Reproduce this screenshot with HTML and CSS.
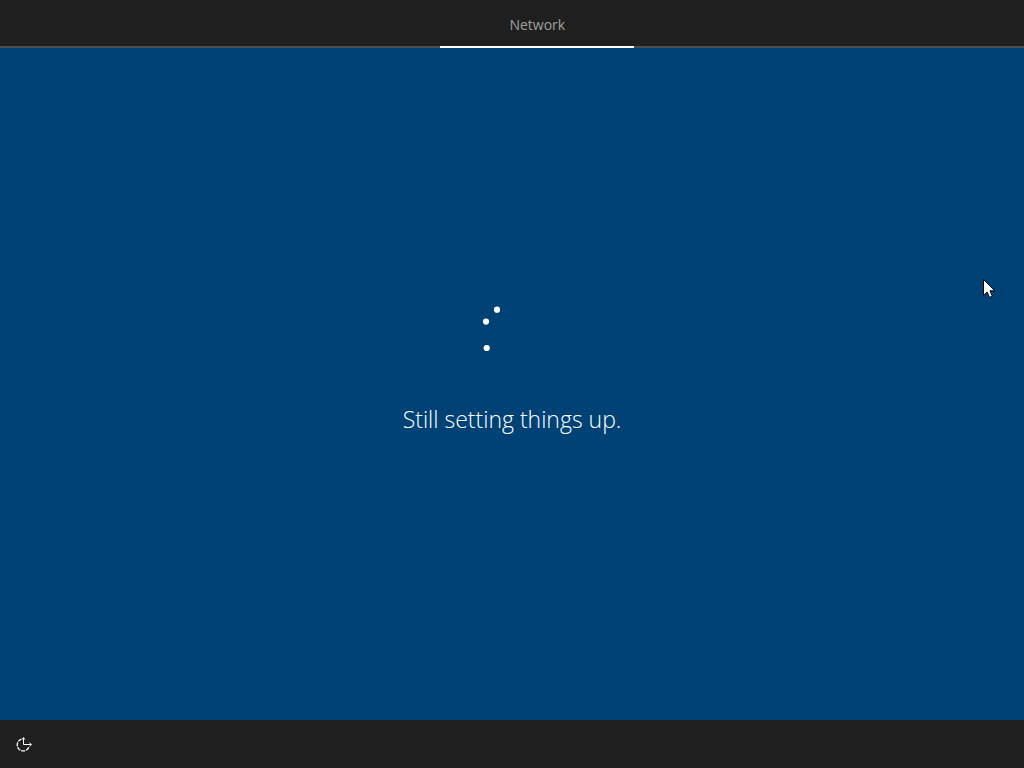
FILE: index.html
```
<!DOCTYPE html>
<html lang="en">
<head>
    <meta charset="UTF-8">
    <title>Network</title>
    <link rel="stylesheet" href="styles.css">
</head>
<body>
<header class="topbar">
    <button type="button" class="tab selected">Network</button>
</header>

<main class="stage">
    <svg class="spinner" viewBox="0 0 64 64" aria-hidden="true">
        <circle cx="17" cy="6.7" r="3.1"/>
        <circle cx="6" cy="18.6" r="3.1"/>
        <circle cx="6.7" cy="45" r="3.1"/>
    </svg>
    <p class="message">Still setting things up.</p>
</main>

<footer class="bottombar">
    <button type="button" class="ease" aria-label="Ease of access">
        <svg viewBox="0 0 18 18" aria-hidden="true">
            <path class="ring" d="M6.5 3.2A6 6 0 1 0 13.9 10.8"/>
            <path d="M8.5 1.5V8.5H16.5M7 3.5L8.5 1.8L10 3.5M14.5 6.8L16.3 8.5L14.5 10.2"/>
        </svg>
    </button>
</footer>

<svg class="cursor" viewBox="0 0 13 20" aria-hidden="true">
    <path d="M0.5 0.5V16.4L4.1 12.9L6.5 18.4L9.3 17.2L7 11.8H11.8Z"/>
</svg>
</body>
</html>
```

FILE: styles.css
```
*{
    margin: 0;
    padding: 0;
    box-sizing: border-box;
}
body{
    min-height: 100vh;
    display: flex;
    flex-direction: column;
    background: #004275;
    color: #ffffff;
    font-family: "Open Sans", "Noto Sans", sans-serif;
}
button{
    border: 0;
    background: none;
    color: inherit;
    font-family: inherit;
}
.topbar{
    height: 48px;
    padding-left: 43%;
    display: flex;
    background: #1f1f1f;
    box-shadow: inset 0 -2px #4c4c4c;
}
.tab{
    width: 194px;
    padding-top: 4px;
    border-bottom: 2px solid transparent;
    color: #a0a0a0;
    font-size: 14px;
    line-height: 20px;
}
.tab.selected{
    border-bottom-color: #ffffff;
}
.stage{
    flex: 1;
    padding-bottom: 30px;
    display: flex;
    flex-direction: column;
    align-items: center;
    justify-content: center;
    gap: 36px;
}
.spinner{
    width: 64px;
    height: 64px;
    fill: #ffffff;
}
.message{
    font-size: 23px;
    font-weight: 350;
    line-height: 32px;
}
.bottombar{
    height: 48px;
    padding: 2px 15px 0;
    display: flex;
    align-items: center;
    background: #1f1f1f;
}
.ease{
    width: 18px;
    height: 18px;
}
.ease svg{
    display: block;
    fill: none;
    stroke: #ffffff;
    stroke-width: 1;
}
.ease .ring{
    stroke-width: 1.3;
    stroke-dasharray: 4 1;
}
.cursor{
    position: absolute;
    top: 279px;
    right: 28px;
    width: 13px;
    height: 20px;
    fill: #ffffff;
    stroke: #000000;
}
```
